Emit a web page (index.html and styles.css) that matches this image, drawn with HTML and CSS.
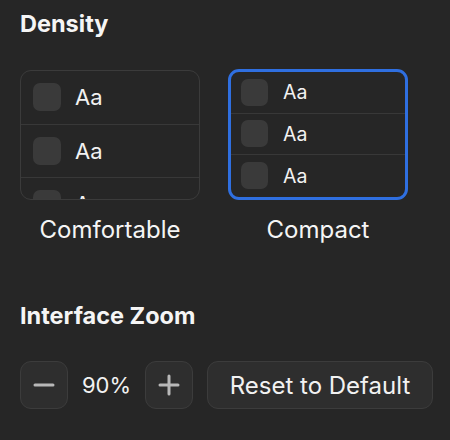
FILE: index.html
```html
<!DOCTYPE html>
<html>
<head>
<meta charset="utf-8">
<link rel="stylesheet" href="styles.css">
</head>
<body>
<div class="panel">
  <h2 class="heading">Density</h2>
  <div class="density">
    <div class="option">
      <div class="card comfortable">
        <div class="row"><span class="box"></span><span class="aa">Aa</span></div>
        <div class="row"><span class="box"></span><span class="aa">Aa</span></div>
        <div class="row"><span class="box"></span><span class="aa">Aa</span></div>
      </div>
      <div class="label">Comfortable</div>
    </div>
    <div class="option">
      <div class="card compact selected">
        <div class="row"><span class="box"></span><span class="aa">Aa</span></div>
        <div class="row"><span class="box"></span><span class="aa">Aa</span></div>
        <div class="row"><span class="box"></span><span class="aa">Aa</span></div>
      </div>
      <div class="label">Compact</div>
    </div>
  </div>
  <h2 class="heading zoom-heading">Interface Zoom</h2>
  <div class="zoom">
    <button class="btn icon-btn" aria-label="Zoom out">
      <svg width="22" height="22" viewBox="0 0 22 22"><line x1="2" y1="11" x2="20" y2="11" stroke="#b8b8b8" stroke-width="3" stroke-linecap="round"/></svg>
    </button>
    <span class="value">90%</span>
    <button class="btn icon-btn" aria-label="Zoom in">
      <svg width="22" height="22" viewBox="0 0 22 22"><line x1="2" y1="11" x2="20" y2="11" stroke="#b8b8b8" stroke-width="3" stroke-linecap="round"/><line x1="11" y1="2" x2="11" y2="20" stroke="#b8b8b8" stroke-width="3" stroke-linecap="round"/></svg>
    </button>
    <button class="btn reset">Reset to Default</button>
  </div>
</div>
</body>
</html>
```
FILE: styles.css
```css
html, body {
  margin: 0;
  padding: 0;
  background: #262626;
}
body {
  font-family: Inter, "Noto Sans", sans-serif;
  color: #f2f2f2;
  width: 450px;
  height: 440px;
  overflow: hidden;
}
.panel {
  padding: 8px 0 0 20px;
}
.heading {
  margin: 0;
  font-size: 23.5px;
  font-weight: 700;
  line-height: 32px;
  color: #f5f5f5;
}
.density {
  display: flex;
  gap: 28px;
  margin-top: 29px;
}
.option {
  width: 180px;
  display: flex;
  flex-direction: column;
  align-items: center;
}
.card {
  box-sizing: border-box;
  width: 180px;
  height: 131px;
  border-radius: 11px;
  overflow: hidden;
  display: flex;
  flex-direction: column;
}
.comfortable {
  border: 1.5px solid #3b3b3b;
  margin-top: 1px;
  height: 130px;
}
.compact {
  border: 3px solid #2f6fe0;
}
.row {
  display: flex;
  align-items: center;
  flex-shrink: 0;
  border-bottom: 1.5px solid #383838;
}
.row:last-child {
  border-bottom: none;
}
.comfortable .row {
  height: 52.5px;
  padding-left: 12px;
  gap: 14px;
}
.compact .row {
  height: 40.5px;
  padding-left: 10px;
  gap: 15px;
}
.compact .row:last-child {
  height: 41px;
}
.box {
  width: 28px;
  height: 28px;
  border-radius: 7px;
  background: #3a3a3a;
  flex-shrink: 0;
}
.compact .box {
  width: 27px;
  height: 27px;
}
.aa {
  color: #f2f2f2;
}
.comfortable .aa {
  font-size: 22px;
}
.compact .aa {
  font-size: 19.5px;
}
.label {
  margin-top: 14px;
  font-size: 24px;
  line-height: 32px;
  color: #f5f5f5;
}
.zoom-heading {
  margin-top: 54px;
}
.zoom {
  display: flex;
  align-items: center;
  margin-top: 29px;
}
.btn {
  box-sizing: border-box;
  flex-shrink: 0;
  height: 48px;
  border: 1.5px solid #3c3c3c;
  background: #2e2e2e;
  border-radius: 11px;
  color: #f2f2f2;
  font-family: inherit;
  padding: 0;
  display: flex;
  align-items: center;
  justify-content: center;
}
.icon-btn {
  width: 48px;
}
.value {
  flex-shrink: 0;
  width: 77px;
  text-align: center;
  font-size: 22px;
}
.reset {
  margin-left: 14px;
  width: 226px;
  font-size: 24px;
}
```
